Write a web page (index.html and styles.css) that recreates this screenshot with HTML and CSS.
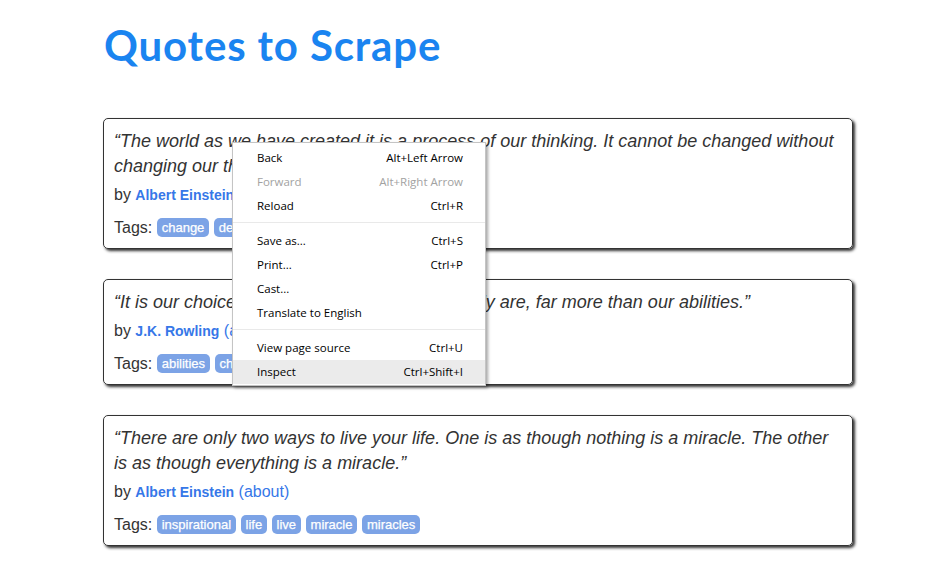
FILE: index.html
```html
<!DOCTYPE html>
<html>
<head>
<meta charset="utf-8">
<title>Quotes to Scrape</title>
<link rel="stylesheet" href="styles.css">
</head>
<body>
<div class="container">
  <h1 class="title">Quotes to Scrape</h1>
  <div class="quote">
    <span class="text">“The world as we have created it is a process of our thinking. It cannot be changed without changing our thinking.”</span>
    <div class="by">by <a class="author">Albert Einstein</a> <a class="about">(about)</a></div>
    <div class="tags">Tags: <a class="tag">change</a> <a class="tag">deep-thoughts</a> <a class="tag">thinking</a> <a class="tag">world</a></div>
  </div>
  <div class="quote">
    <span class="text">“It is our choices, Harry, that show what we truly are, far more than our abilities.”</span>
    <div class="by">by <a class="author">J.K. Rowling</a> <a class="about">(about)</a></div>
    <div class="tags">Tags: <a class="tag">abilities</a> <a class="tag">choices</a></div>
  </div>
  <div class="quote">
    <span class="text">“There are only two ways to live your life. One is as though nothing is a miracle. The other is as though everything is a miracle.”</span>
    <div class="by">by <a class="author">Albert Einstein</a> <a class="about">(about)</a></div>
    <div class="tags">Tags: <a class="tag">inspirational</a> <a class="tag">life</a> <a class="tag">live</a> <a class="tag">miracle</a> <a class="tag">miracles</a></div>
  </div>
</div>
<div class="menu">
  <div class="item"><span>Back</span><span>Alt+Left Arrow</span></div>
  <div class="item disabled"><span>Forward</span><span>Alt+Right Arrow</span></div>
  <div class="item"><span>Reload</span><span>Ctrl+R</span></div>
  <div class="sep"></div>
  <div class="item"><span>Save as...</span><span>Ctrl+S</span></div>
  <div class="item"><span>Print...</span><span>Ctrl+P</span></div>
  <div class="item"><span>Cast...</span><span></span></div>
  <div class="item"><span>Translate to English</span><span></span></div>
  <div class="sep"></div>
  <div class="item"><span>View page source</span><span>Ctrl+U</span></div>
  <div class="item active"><span>Inspect</span><span>Ctrl+Shift+I</span></div>
</div>
</body>
</html>
```
FILE: styles.css
```css
html, body {
  margin: 0;
  padding: 0;
  background: #fff;
}
body {
  font-family: "Liberation Sans", Arial, sans-serif;
  color: #333;
  font-size: 16px;
}
.container {
  width: 750px;
  margin-left: 103px;
}
.title {
  font-family: Lato, "Open Sans", sans-serif;
  font-weight: 700;
  font-size: 42px;
  color: #1a84f0;
  margin: 0;
  padding-top: 20px;
  height: 98px;
  line-height: 50px;
  letter-spacing: 0.85px;
  padding-left: 1px;
}
.quote {
  border: 1px solid #333;
  border-radius: 5px;
  box-shadow: 2px 2px 3px #333;
  padding: 10px 10px 9px;
  margin-bottom: 30px;
}
.text {
  display: block;
  font-style: italic;
  font-size: 18px;
  line-height: 25px;
  margin-bottom: 4px;
}
.by {
  line-height: 24px;
  margin-bottom: 10px;
}
.author {
  color: #3677e8;
  font-weight: bold;
  font-size: 14px;
}
.about {
  color: #3677e8;
}
.tags {
  line-height: 22px;
}
.tag {
  display: inline-block;
  background: #7ca3e6;
  color: #fff;
  font-size: 13px;
  line-height: 15px;
  padding: 2px 5px;
  border-radius: 5px;
  vertical-align: 1px;
  -webkit-text-stroke: 0.25px #fff;
}
.menu {
  position: absolute;
  left: 232px;
  top: 142px;
  width: 252px;
  background: #fff;
  border: 1px solid #c4c4c4;
  box-shadow: 2px 2px 3px rgba(0,0,0,0.35);
  padding: 3px 0 1px;
  font-family: "Open Sans", "Noto Sans", sans-serif;
  font-size: 11.5px;
  color: #000;
}
.item {
  display: flex;
  justify-content: space-between;
  height: 24px;
  line-height: 24px;
  padding: 0 22px 0 24px;
}
.item.disabled {
  color: #a2a2a2;
}
.item.active {
  background: #ebebeb;
}
.sep {
  height: 1px;
  background: #e9e9e9;
  margin: 4px 0 6px;
}
```
